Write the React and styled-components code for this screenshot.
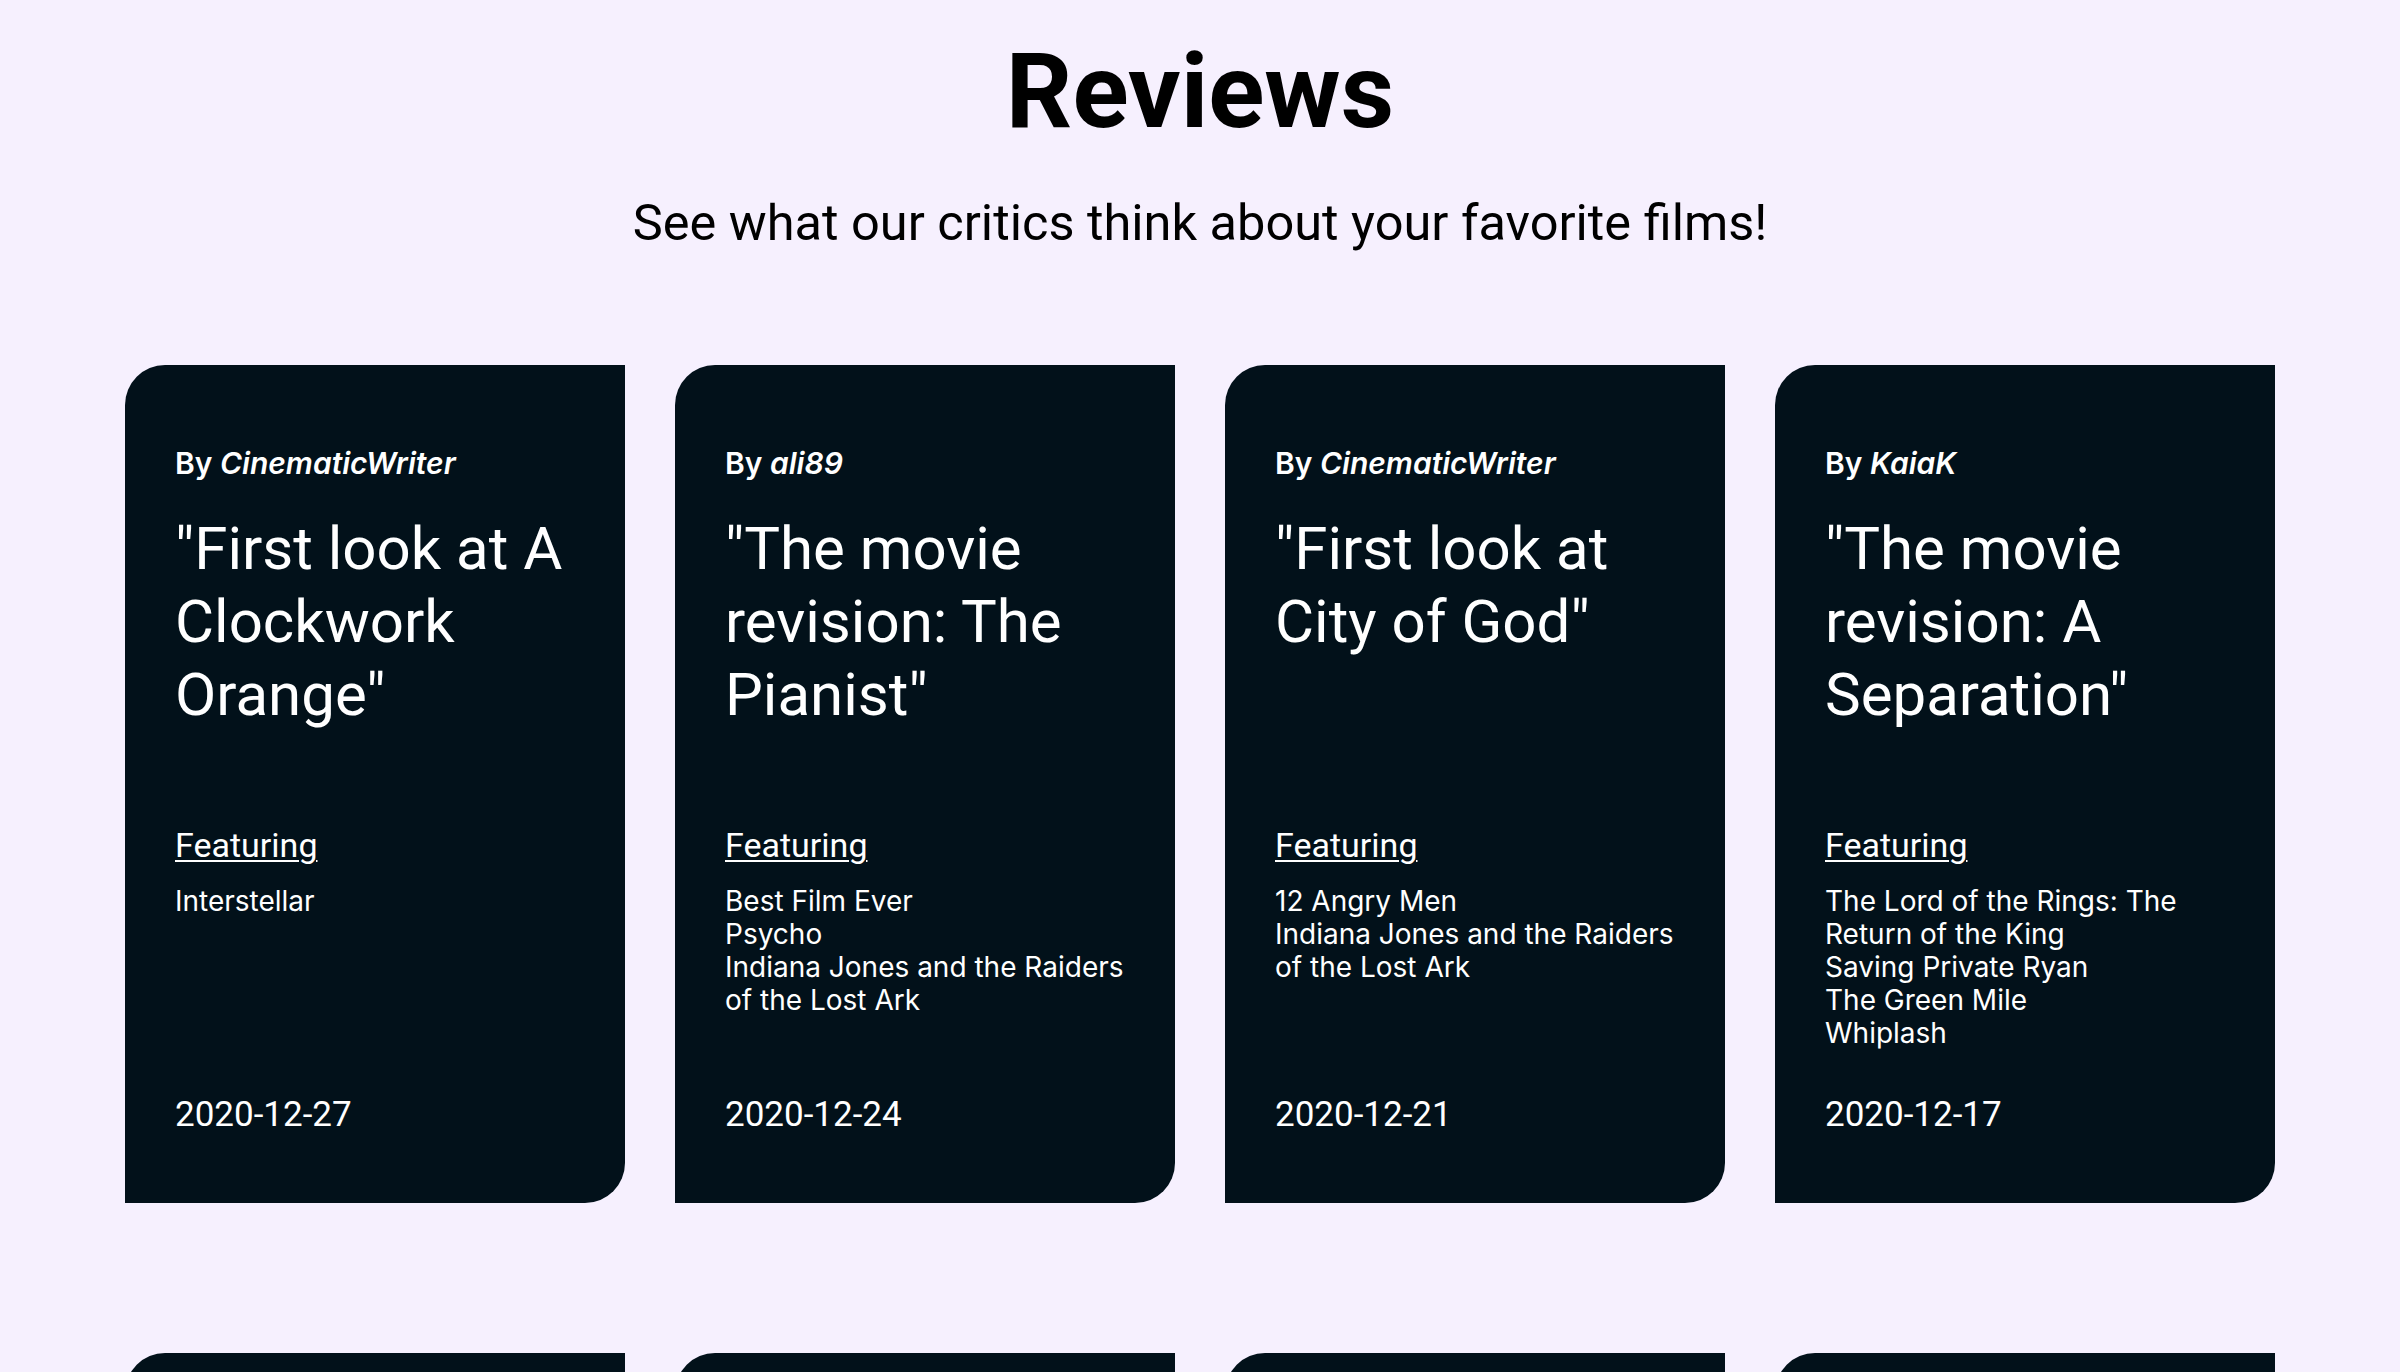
import React from 'react'
import styled, { createGlobalStyle } from 'styled-components'

const reviews = [
  {
    author: 'CinematicWriter',
    title: '"First look at A Clockwork Orange"',
    films: ['Interstellar'],
    date: '2020-12-27',
  },
  {
    author: 'ali89',
    title: '"The movie revision: The Pianist"',
    films: ['Best Film Ever', 'Psycho', 'Indiana Jones and the Raiders of the Lost Ark'],
    date: '2020-12-24',
  },
  {
    author: 'CinematicWriter',
    title: '"First look at City of God"',
    films: ['12 Angry Men', 'Indiana Jones and the Raiders of the Lost Ark'],
    date: '2020-12-21',
  },
  {
    author: 'KaiaK',
    title: '"The movie revision: A Separation"',
    films: ['The Lord of the Rings: The Return of the King', 'Saving Private Ryan', 'The Green Mile', 'Whiplash'],
    date: '2020-12-17',
  },
  {
    author: 'ali89',
    title: '"First look at Parasite"',
    films: ['Spirited Away'],
    date: '2020-12-14',
  },
  {
    author: 'KaiaK',
    title: '"The movie revision: Seven Samurai"',
    films: ['Rashomon', 'Ikiru'],
    date: '2020-12-10',
  },
  {
    author: 'CinematicWriter',
    title: '"First look at Memento"',
    films: ['Inception', 'The Prestige'],
    date: '2020-12-06',
  },
  {
    author: 'ali89',
    title: '"The movie revision: Casablanca"',
    films: ['Citizen Kane'],
    date: '2020-12-02',
  },
]

const App = () => {
  return (
    <>
      <GlobalStyle />
      <Page>
        <Heading>Reviews</Heading>
        <Subtitle>See what our critics think about your favorite films!</Subtitle>

        <CardGrid>
          {reviews.map((review, i) => (
            <Card key={i}>
              <Author>
                By <AuthorName>{review.author}</AuthorName>
              </Author>
              <Title>{review.title}</Title>
              <FeaturingLabel>Featuring</FeaturingLabel>
              <FilmList>
                {review.films.map((film) => (
                  <Film key={film}>{film}</Film>
                ))}
              </FilmList>
              <DateText>{review.date}</DateText>
            </Card>
          ))}
        </CardGrid>
      </Page>
    </>
  )
}

export default App

const GlobalStyle = createGlobalStyle`
  * {
    box-sizing: border-box;
  }

  body {
    margin: 0;
    background-color: #f6f0fe;
    font-family: Roboto, "Liberation Sans", sans-serif;
    color: #000;
  }
`

const Page = styled.main`
  display: flex;
  flex-direction: column;
  align-items: center;
  padding: 31px 0 80px;
`

const Heading = styled.h1`
  margin: 0;
  font-size: 104px;
  font-weight: 700;
`

const Subtitle = styled.p`
  margin: 41px 0 0;
  font-size: 50.5px;
  font-weight: 400;
`

const CardGrid = styled.section`
  margin-top: 113px;
  display: grid;
  grid-template-columns: repeat(4, 500px);
  column-gap: 50px;
  row-gap: 150px;
`

const Card = styled.article`
  height: 838px;
  display: flex;
  flex-direction: column;
  padding: 80px 50px 68px;
  background-color: #02111a;
  color: #fff;
  border-radius: 40px 0 40px 0;
`

const Author = styled.p`
  margin: 0;
  font-family: Inter, "Noto Sans", sans-serif;
  font-size: 30px;
  font-weight: 600;
`

const AuthorName = styled.em`
  font-style: italic;
`

const Title = styled.h2`
  margin: 31px 0 94px;
  min-height: 219px;
  font-size: 60px;
  line-height: 73px;
  font-weight: 400;
`

const FeaturingLabel = styled.h3`
  margin: 0;
  font-size: 34px;
  font-weight: 400;
  text-decoration: underline;
  text-decoration-thickness: 2px;
  text-underline-offset: 3px;
`

const FilmList = styled.ul`
  list-style: none;
  margin: 20px 0 0;
  padding: 0;
  font-family: Inter, "Noto Sans", sans-serif;
`

const Film = styled.li`
  font-size: 28px;
  line-height: 33px;
`

const DateText = styled.p`
  margin: auto 0 0;
  font-size: 35px;
`
